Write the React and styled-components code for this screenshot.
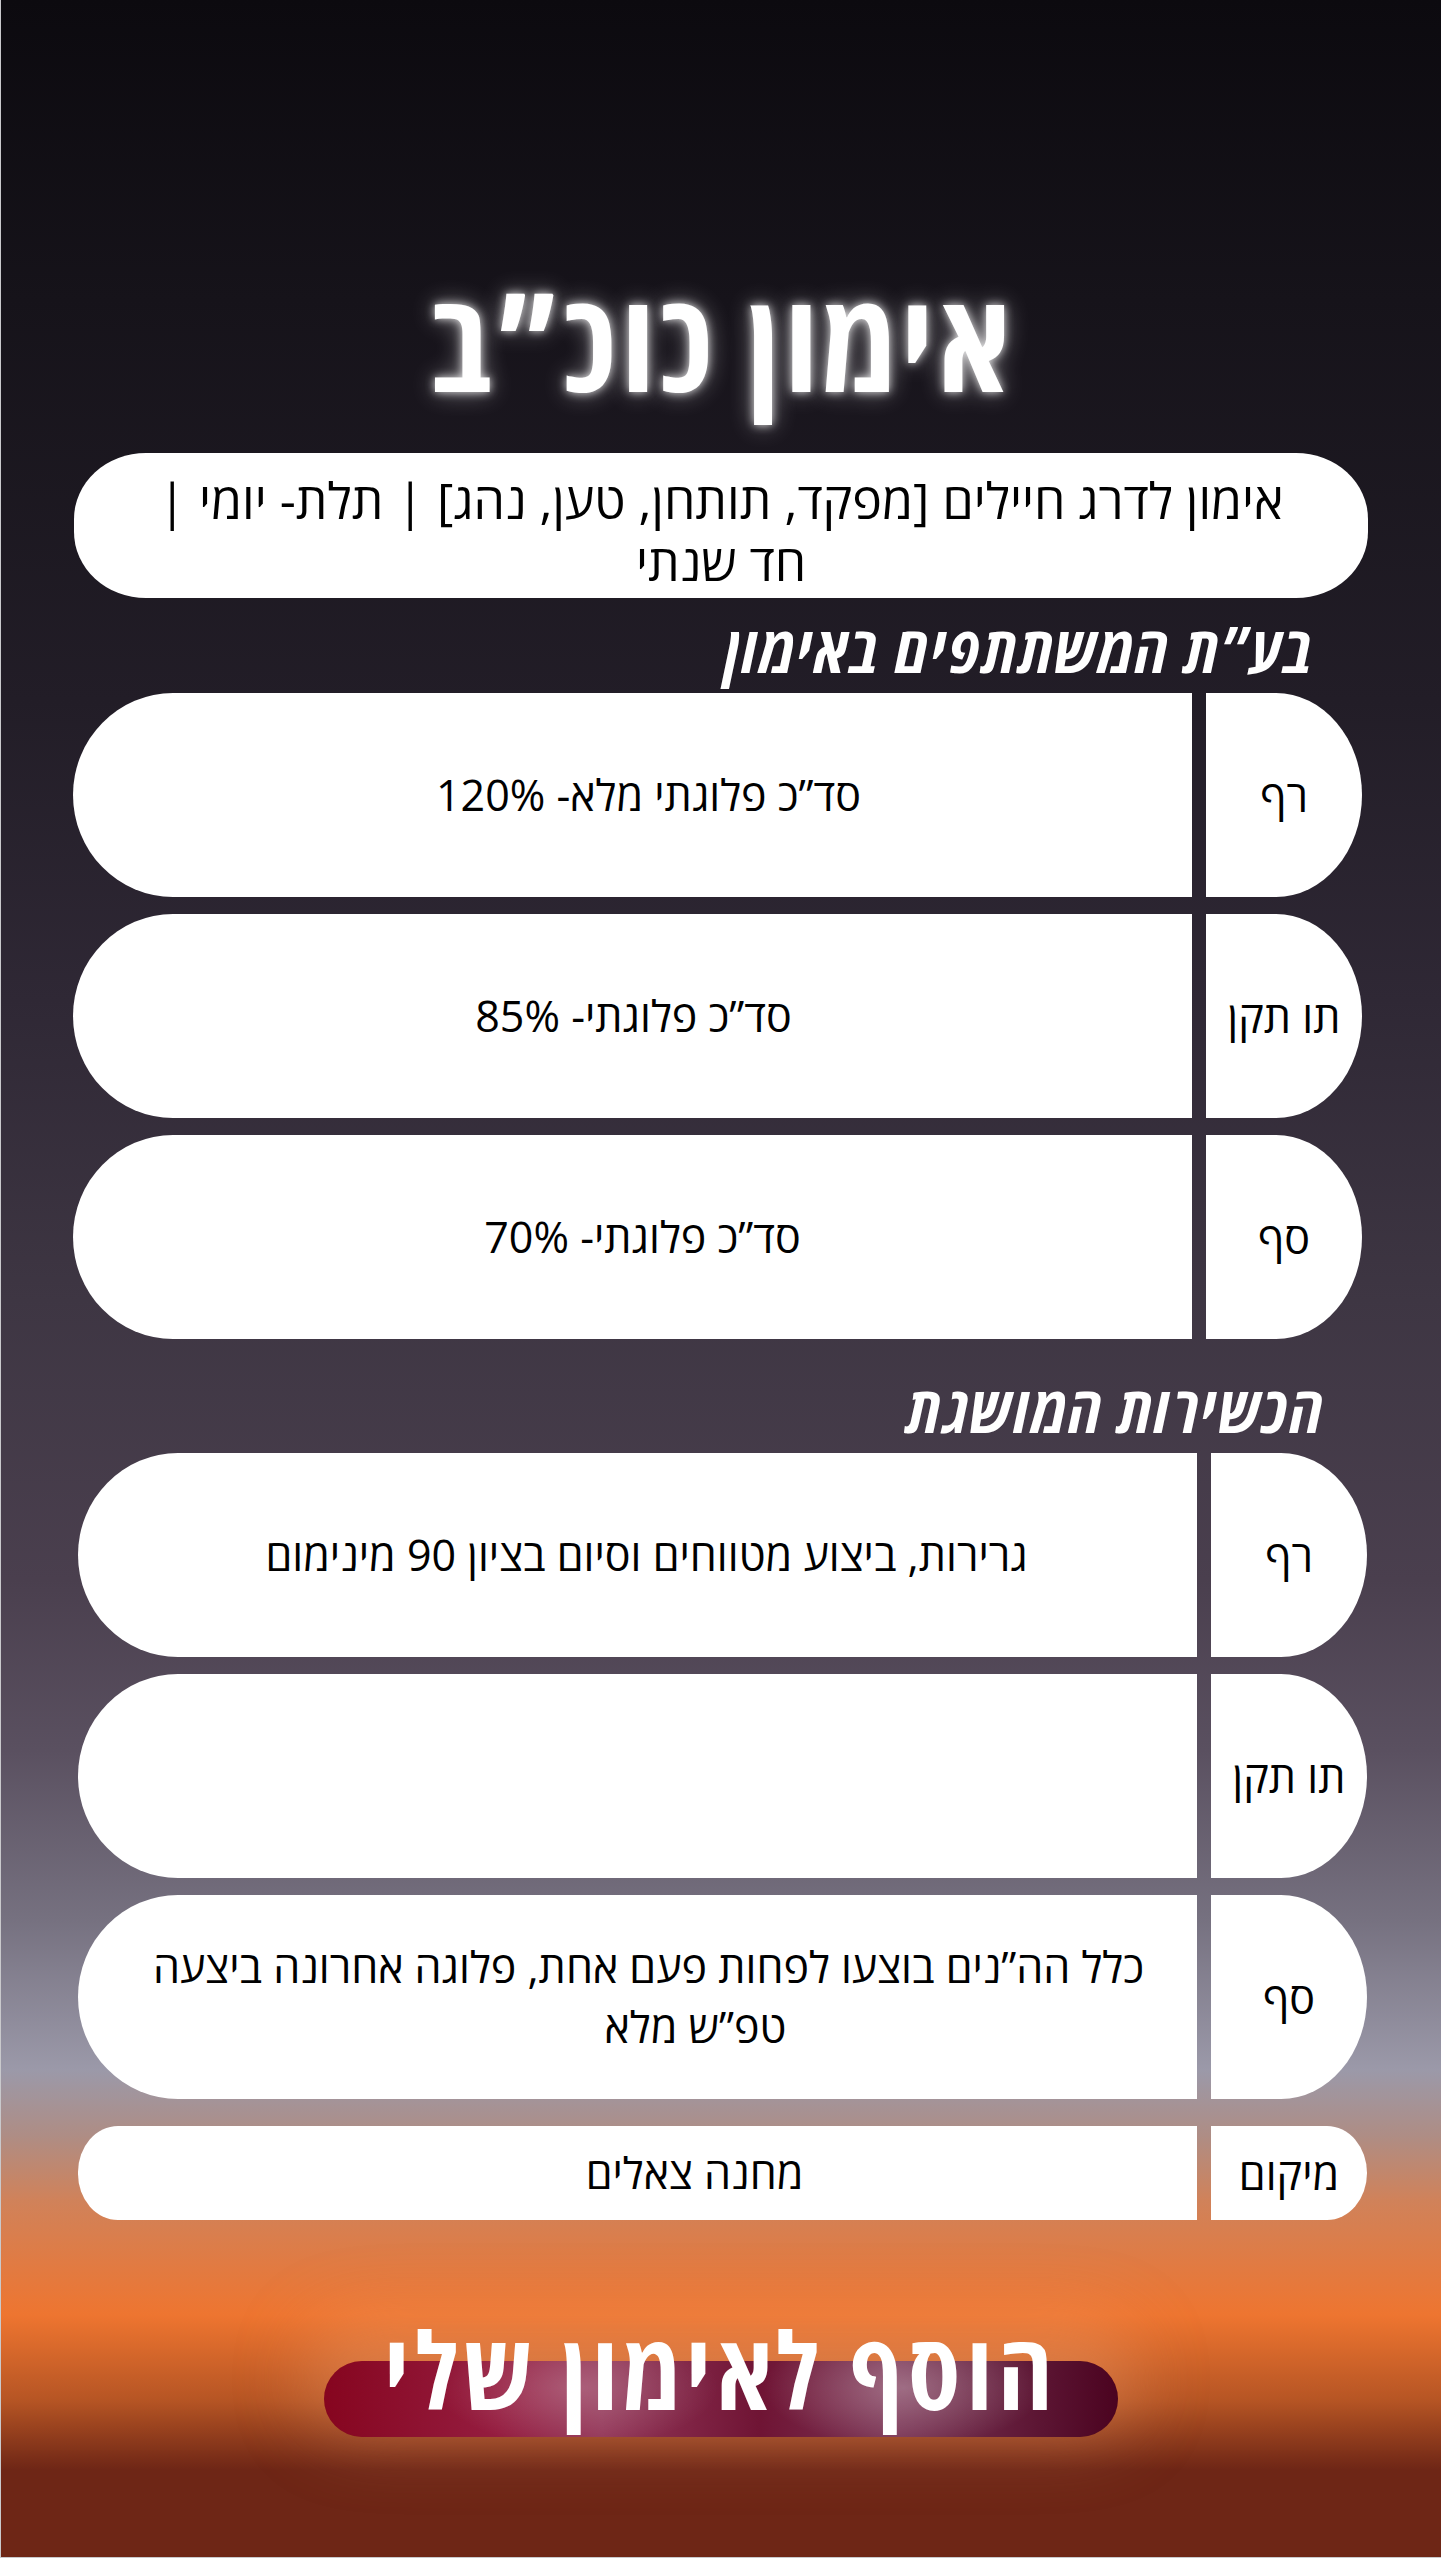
import React from 'react'
import styled, { createGlobalStyle } from 'styled-components'

const GlobalStyle = createGlobalStyle`
  html, body {
    margin: 0;
    padding: 0;
  }
`

const App = () => (
  <Page>
    <GlobalStyle />

    <Title>אימון כוכ”ב</Title>

    <Summary>
      אימון לדרג חיילים [מפקד, תותחן, טען, נהג] | תלת- יומי |
      <br />
      חד שנתי
    </Summary>

    <Section $left={72} $right={79}>
      <Heading $pad={47}>בע”ת המשתתפים באימון</Heading>
      <Rows>
        <Row>
          <Label>רף</Label>
          <Value $shift={32}>סד”כ פלוגתי מלא- 120%</Value>
        </Row>
        <Row>
          <Label>תו תקן</Label>
          <Value $shift={2}>סד”כ פלוגתי- 85%</Value>
        </Row>
        <Row>
          <Label>סף</Label>
          <Value $shift={20}>סד”כ פלוגתי- 70%</Value>
        </Row>
      </Rows>
    </Section>

    <Section $left={77} $right={74}>
      <Heading $top={37} $pad={42}>הכשירות המושגת</Heading>
      <Rows>
        <Row>
          <Label>רף</Label>
          <Value $shift={18}>גרירות, ביצוע מטווחים וסיום בציון 90 מינימום</Value>
        </Row>
        <Row>
          <Label>תו תקן</Label>
          <Value />
        </Row>
        <Row>
          <Label>סף</Label>
          <Value $shift={22}>
            כלל הה”נים בוצעו לפחות פעם אחת, פלוגה אחרונה ביצעה
            <br />
            <Tail>טפ”ש מלא</Tail>
          </Value>
        </Row>
        <Row $small>
          <Label $small>מיקום</Label>
          <Value $small $shift={114}>מחנה צאלים</Value>
        </Row>
      </Rows>
    </Section>

    <AddButton>
      <AddText>הוסף לאימון שלי</AddText>
    </AddButton>
  </Page>
)

const Page = styled.div`
  direction: rtl;
  box-sizing: border-box;
  min-height: 2558px;
  padding-top: 271px;
  display: flex;
  flex-direction: column;
  font-family: 'Open Sans', 'DejaVu Sans', sans-serif;
  border-left: 1px solid #c9c9cc;
  border-bottom: 1px solid #c9c9cc;
  background: linear-gradient(
    180deg,
    #0c0a0f 0px,
    #16131a 300px,
    #221d27 700px,
    #2f2835 1000px,
    #3e3643 1300px,
    #4a3f4e 1580px,
    #5a5060 1750px,
    #767180 1920px,
    #9b99a9 2070px,
    #ae8d85 2135px,
    #d0825a 2200px,
    #ee7530 2315px,
    #b65524 2400px,
    #6e2616 2470px,
    #6e2616 2558px
  );
`

const Title = styled.h1`
  margin: 0;
  height: 135px;
  font-size: 138px;
  font-stretch: semi-condensed;
  letter-spacing: 5px;
  line-height: 135px;
  font-weight: 700;
  color: #fff;
  text-align: center;
  text-shadow: 0 0 10px rgba(255, 255, 255, 0.85), 0 0 24px rgba(255, 255, 255, 0.45);
`

const Summary = styled.div`
  box-sizing: border-box;
  margin: 47px 73px 0 73px;
  height: 145px;
  display: flex;
  flex-direction: column;
  justify-content: center;
  align-items: center;
  padding-top: 10px;
  background: #fff;
  border-radius: 72px / 66px;
  color: #000;
  font-size: 50px;
  line-height: 62px;
  text-align: center;
`

const Section = styled.section`
  margin: 0 ${p => p.$right}px 0 ${p => p.$left}px;
`

const Heading = styled.h2`
  margin: ${p => p.$top || 18}px 0 0 0;
  padding-right: ${p => p.$pad}px;
  height: 65px;
  font-size: 65px;
  font-stretch: 87.5%;
  letter-spacing: 2.5px;
  line-height: 65px;
  font-weight: 700;
  font-style: italic;
  color: #fff;
  text-align: right;
`

const Rows = styled.div`
  margin-top: 12px;
  display: flex;
  flex-direction: column;
  gap: 17px;
`

const Row = styled.div`
  display: flex;
  gap: 14px;
  height: ${p => (p.$small ? 94 : 204)}px;
  margin-top: ${p => (p.$small ? 10 : 0)}px;
`

const Label = styled.div`
  flex: 0 0 156px;
  display: flex;
  align-items: center;
  justify-content: center;
  background: #fff;
  color: #000;
  font-size: 43px;
  border-radius: ${p => (p.$small ? '0 40px 40px 0 / 0 47px 47px 0' : '0 86px 86px 0 / 0 102px 102px 0')};
`

const Value = styled.div`
  flex: 1;
  box-sizing: border-box;
  display: flex;
  align-items: center;
  justify-content: center;
  flex-direction: column;
  padding-left: ${p => p.$shift || 0}px;
  background: #fff;
  color: #000;
  font-size: 43px;
  line-height: 60px;
  text-align: center;
  border-radius: ${p => (p.$small ? '40px 0 0 40px / 46px 0 0 46px' : '100px 0 0 100px / 102px 0 0 102px')};
`

const Tail = styled.span`
  padding-left: 94px;
`

const AddButton = styled.button`
  align-self: center;
  margin-top: 141px;
  width: 794px;
  height: 76px;
  padding: 0;
  border: none;
  display: flex;
  align-items: center;
  justify-content: center;
  border-radius: 38px;
  cursor: pointer;
  font-family: inherit;
  background:
    radial-gradient(ellipse 140px 60px at 32% 35%, rgba(255, 255, 255, 0.22), transparent),
    radial-gradient(ellipse 140px 60px at 73% 35%, rgba(255, 255, 255, 0.28), transparent),
    linear-gradient(90deg, #86051f 0%, #951d40 22%, #933658 35%, #6f1434 55%, #7b3656 72%, #4b0320 100%);
  box-shadow: 0 -20px 70px 20px rgba(244, 170, 120, 0.35);
`

const AddText = styled.span`
  padding-bottom: 60px;
  font-size: 106px;
  font-stretch: semi-condensed;
  letter-spacing: 6px;
  line-height: 1;
  font-weight: 700;
  color: #fff;
  white-space: nowrap;
`

export default App
